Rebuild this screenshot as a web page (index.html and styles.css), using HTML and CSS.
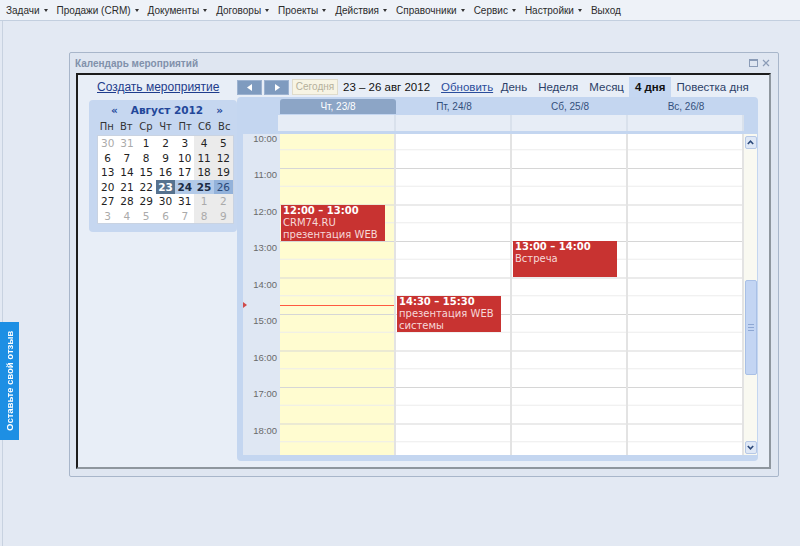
FILE: index.html
```html
<!DOCTYPE html>
<html lang="ru">
<head>
    <meta charset="UTF-8">
    <title>Календарь мероприятий</title>
    <link rel="stylesheet" href="styles.css">
</head>
<body>
<div class="menu">
    <span class="menu-item">Задачи <i class="arrow"></i></span>
    <span class="menu-item">Продажи (CRM) <i class="arrow"></i></span>
    <span class="menu-item">Документы <i class="arrow"></i></span>
    <span class="menu-item">Договоры <i class="arrow"></i></span>
    <span class="menu-item">Проекты <i class="arrow"></i></span>
    <span class="menu-item">Действия <i class="arrow"></i></span>
    <span class="menu-item">Справочники <i class="arrow"></i></span>
    <span class="menu-item">Сервис <i class="arrow"></i></span>
    <span class="menu-item">Настройки <i class="arrow"></i></span>
    <span class="menu-item">Выход</span>
</div>

<div class="page">
    <div class="window">
        <div class="window-title">
            <span>Календарь мероприятий</span>
            <span class="window-buttons">
                <svg width="9" height="8" viewBox="0 0 9 8"><rect x="0.5" y="0.5" width="8" height="7" fill="none" stroke="#8b9cb7"/><line x1="0.5" y1="1.5" x2="8.5" y2="1.5" stroke="#8b9cb7"/></svg>
                <svg width="8" height="8" viewBox="0 0 8 8"><path d="M1 1 L7 7 M7 1 L1 7" stroke="#8b9cb7" stroke-width="1.2"/></svg>
            </span>
        </div>

        <div class="window-body">
            <!-- левая колонка: ссылка и мини-календарь -->
            <div class="side">
                <a class="create-link" href="#">Создать мероприятие</a>
                <div class="minical">
                    <div class="mc-head"><span>«</span><span>Август 2012</span><span>»</span></div>
                    <div class="mc-names">
                        <span>Пн</span><span>Вт</span><span>Ср</span><span>Чт</span><span>Пт</span><span>Сб</span><span>Вс</span>
                    </div>
                    <div class="mc-grid">
                        <span class="o">30</span><span class="o">31</span><span>1</span><span>2</span><span>3</span><span class="we">4</span><span class="we">5</span>
                        <span>6</span><span>7</span><span>8</span><span>9</span><span>10</span><span class="we">11</span><span class="we">12</span>
                        <span>13</span><span>14</span><span>15</span><span>16</span><span>17</span><span class="we">18</span><span class="we">19</span>
                        <span>20</span><span>21</span><span>22</span><span class="sel">23</span><span class="wk">24</span><span class="wk">25</span><span class="wk last">26</span>
                        <span>27</span><span>28</span><span>29</span><span>30</span><span>31</span><span class="we o">1</span><span class="we o">2</span>
                        <span class="o">3</span><span class="o">4</span><span class="o">5</span><span class="o">6</span><span class="o">7</span><span class="we o">8</span><span class="we o">9</span>
                    </div>
                </div>
            </div>

            <div class="main">
                <div class="toolbar">
                    <span class="nav-btn"><svg width="6" height="7" viewBox="0 0 6 7"><path d="M5 0 L0 3.5 L5 7 Z" fill="#fff"/></svg></span>
                    <span class="nav-btn"><svg width="6" height="7" viewBox="0 0 6 7"><path d="M1 0 L6 3.5 L1 7 Z" fill="#fff"/></svg></span>
                    <span class="today-btn">Сегодня</span>
                    <span class="range">23 – 26 авг 2012</span>
                    <a class="refresh" href="#">Обновить</a>
                    <span class="view">День</span>
                    <span class="view">Неделя</span>
                    <span class="view">Месяц</span>
                    <span class="view active">4 дня</span>
                    <span class="view">Повестка дня</span>
                </div>

                <div class="cal">
                    <div class="cal-head">
                        <div class="today">Чт, 23/8</div>
                        <div>Пт, 24/8</div>
                        <div>Сб, 25/8</div>
                        <div>Вс, 26/8</div>
                    </div>
                    <div class="allday">
                        <div></div><div></div><div></div><div></div>
                    </div>
                    <div class="cal-body">
                        <div class="gutter">
                            <i class="now-mark"></i>
                            <div class="hours">
                                <div class="hour">10:00</div>
                                <div class="hour">11:00</div>
                                <div class="hour">12:00</div>
                                <div class="hour">13:00</div>
                                <div class="hour">14:00</div>
                                <div class="hour">15:00</div>
                                <div class="hour">16:00</div>
                                <div class="hour">17:00</div>
                                <div class="hour">18:00</div>
                            </div>
                        </div>
                        <div class="days">
                            <div class="day today">
                                <div class="event" style="top: 70.5px">
                                    <b>12:00 – 13:00</b>CRM74.RU<br>презентация WEB
                                </div>
                                <div class="now-line" style="top: 171px"></div>
                            </div>
                            <div class="day">
                                <div class="event" style="top: 161.75px">
                                    <b>14:30 – 15:30</b>презентация WEB системы
                                </div>
                            </div>
                            <div class="day">
                                <div class="event" style="top: 107px">
                                    <b>13:00 – 14:00</b>Встреча
                                </div>
                            </div>
                            <div class="day"></div>
                        </div>
                        <div class="scroll">
                            <span class="sb-btn"><svg width="7" height="5" viewBox="0 0 7 5"><path d="M0.8 4 L3.5 1.2 L6.2 4" fill="none" stroke="#2d4a7a" stroke-width="1.6"/></svg></span>
                            <span class="thumb"><i></i><i></i><i></i></span>
                            <span class="sb-btn down"><svg width="7" height="5" viewBox="0 0 7 5"><path d="M0.8 1 L3.5 3.8 L6.2 1" fill="none" stroke="#2d4a7a" stroke-width="1.6"/></svg></span>
                        </div>
                    </div>
                </div>
            </div>
        </div>
    </div>
</div>

<a class="feedback" href="#">Оставьте свой отзыв</a>
</body>
</html>
```

FILE: styles.css
```css
body {
    margin: 0;
    height: 546px;
    overflow: hidden;
    background: #e3e9f3;
    font-family: "Liberation Sans", Arial, sans-serif;
}

/* верхнее меню */
.menu {
    height: 20px;
    display: flex;
    align-items: center;
    gap: 9px;
    padding-left: 6px;
    background: #eef2f8;
    border-bottom: 1px solid #c3cfdf;
    font-size: 10px;
    color: #2b2b2b;
}

.menu-item {
    display: flex;
    align-items: center;
    gap: 4px;
    white-space: nowrap;
}

.arrow {
    width: 0;
    height: 0;
    border-left: 2.5px solid transparent;
    border-right: 2.5px solid transparent;
    border-top: 3px solid #333;
}

.page {
    margin-left: 2px;
    border-left: 1px solid #c8d2e0;
    height: 525px;
    padding-top: 31px;
    box-sizing: border-box;
}

/* окно */
.window {
    margin-left: 66px;
    width: 710px;
    height: 425px;
    box-sizing: border-box;
    background: #dfe6f1;
    border: 1px solid #a8b6ca;
    border-radius: 2px;
}

.window-title {
    height: 20px;
    display: flex;
    align-items: center;
    justify-content: space-between;
    padding: 0 8px 0 5px;
    font-size: 10px;
    font-weight: bold;
    color: #8191ab;
}

.window-buttons {
    display: flex;
    gap: 4px;
    align-items: center;
}

.window-body {
    margin: 0 7px 0 6px;
    height: 396px;
    box-sizing: border-box;
    border: 2px solid;
    border-color: #1c1c1c #8e969e #8e969e #1c1c1c;
    background: #e8eef7;
    display: flex;
}

/* левая колонка */
.side {
    flex: none;
    width: 148px;
    margin-left: 11px;
    padding-top: 2px;
}

.create-link {
    display: block;
    height: 21px;
    line-height: 21px;
    margin-left: 8px;
    font-size: 12px;
    color: #1e3c8c;
}

.minical {
    margin-top: 2px;
    height: 132px;
    box-sizing: border-box;
    padding: 2px 3px 0 8px;
    background: #c6d7f0;
    border-radius: 4px;
    font-family: "DejaVu Sans", Verdana, sans-serif;
}

.mc-head {
    height: 16px;
    display: flex;
    align-items: center;
    justify-content: space-between;
    padding: 0 11px 0 14px;
    font-size: 10.5px;
    font-weight: bold;
    color: #23479a;
}

.mc-names {
    display: grid;
    grid-template-columns: repeat(7, 1fr);
    width: 137px;
    height: 17px;
    line-height: 17px;
    text-align: center;
    font-size: 10px;
    color: #333;
}

.mc-grid {
    display: grid;
    grid-template-columns: repeat(7, 1fr);
    grid-template-rows: repeat(6, 1fr);
    width: 137px;
    height: 89px;
    box-sizing: border-box;
    background: #fff;
    border: 1px solid #c9d3e2;
    font-size: 10.5px;
    color: #222;
}

.mc-grid span {
    display: flex;
    align-items: center;
    justify-content: center;
}

.mc-grid .we {
    background: #ebebeb;
}

.mc-grid .o {
    color: #aaa;
}

.mc-grid .sel {
    background: #56728f;
    color: #fff;
    font-weight: bold;
}

.mc-grid .wk {
    background: #b3cae8;
    font-weight: bold;
    color: #1c2b45;
}

.mc-grid .wk.last {
    background: #93b2da;
    font-weight: normal;
    color: #2b4a7a;
}

/* правая колонка */
.main {
    flex: none;
    width: 521px;
    padding-top: 2px;
}

.toolbar {
    height: 20px;
    display: flex;
    align-items: center;
    white-space: nowrap;
}

.toolbar > * {
    flex: none;
}

.nav-btn {
    width: 25px;
    height: 15px;
    box-sizing: border-box;
    margin-right: 2px;
    display: flex;
    align-items: center;
    justify-content: center;
    background: #7f9bbf;
    border: 1px solid #9cb2d0;
}

.today-btn {
    margin-left: 1px;
    width: 46px;
    height: 16px;
    box-sizing: border-box;
    line-height: 14px;
    text-align: center;
    background: #f7f4e4;
    border: 1px solid #e0dccb;
    font-size: 10px;
    color: #b5b09c;
}

.range {
    margin-left: 5px;
    font-size: 11.5px;
    color: #111;
}

.refresh {
    margin: 0 2px 0 11px;
    font-size: 11.5px;
    color: #2a4d9c;
}

.view {
    height: 20px;
    line-height: 20px;
    padding: 0 5.5px;
    font-size: 11.5px;
    color: #2c3f68;
}

.view.active {
    background: #c5d7f1;
    font-weight: bold;
    color: #111;
}

/* календарь */
.cal {
    height: 364px;
    box-sizing: border-box;
    padding: 2px 1px 6px 6px;
    background: #c4d6f0;
    border-radius: 4px;
}

.cal-head {
    display: flex;
    height: 15px;
    margin-left: 37px;
}

.cal-head div {
    width: 116px;
    text-align: center;
    line-height: 15px;
    font-size: 10px;
    color: #34507c;
}

.cal-head .today {
    background: #8ca5c6;
    color: #fff;
    border-radius: 3px 3px 0 0;
}

.allday {
    display: flex;
    height: 16px;
    margin: 1px 13px 0 35px;
    padding-left: 2px;
    background: #e7edf6;
}

.allday div {
    width: 116px;
    box-sizing: border-box;
    border-right: 2px solid #d9e1ec;
}

.cal-body {
    display: flex;
    height: 321px;
    margin-top: 3px;
    overflow: hidden;
}

.gutter {
    width: 37px;
    position: relative;
    background: #dfe7f3;
}

.hours {
    margin-top: -2.5px;
}

.hour {
    height: 36.5px;
    box-sizing: border-box;
    padding: 2px 3px 0 0;
    text-align: right;
    line-height: 10px;
    font-size: 9.5px;
    color: #6a6a6a;
}

.now-mark {
    position: absolute;
    left: 0;
    top: 168px;
    width: 0;
    height: 0;
    border-top: 3.5px solid transparent;
    border-bottom: 3.5px solid transparent;
    border-left: 4px solid #d04a4a;
}

.days {
    display: flex;
    width: 464px;
}

.day {
    position: relative;
    width: 116px;
    box-sizing: border-box;
    border-right: 2px solid #e3e3e3;
    background-color: #fff;
    background-image: linear-gradient(to bottom, #d6d6d6 0, #d6d6d6 1px, transparent 1px, transparent 18px, #ececec 18px, #ececec 19px, transparent 19px);
    background-size: 100% 36.5px;
    background-position: 0 -2.5px;
}

.day.today {
    background-color: #fffcd0;
}

.event {
    position: absolute;
    left: 1px;
    width: 104px;
    height: 36px;
    box-sizing: border-box;
    padding: 0 2px;
    overflow: hidden;
    background: #c83331;
    font-family: "DejaVu Sans", Verdana, sans-serif;
    font-size: 10px;
    line-height: 12px;
    color: #f6d9d9;
}

.event b {
    display: block;
    color: #fff;
}

.now-line {
    position: absolute;
    left: 0;
    right: 0;
    height: 1px;
    background: #ff5a40;
}

.scroll {
    width: 13px;
    display: flex;
    flex-direction: column;
    align-items: center;
    background: #f9f9f1;
}

.sb-btn {
    width: 12px;
    height: 13px;
    margin-top: 2px;
    box-sizing: border-box;
    display: flex;
    align-items: center;
    justify-content: center;
    background: #dfe8f6;
    border: 1px solid #b6c8e6;
    border-radius: 2px;
}

.sb-btn.down {
    margin-top: 66px;
}

.thumb {
    width: 12px;
    height: 95px;
    margin-top: 131px;
    box-sizing: border-box;
    display: flex;
    flex-direction: column;
    align-items: center;
    justify-content: center;
    gap: 2px;
    background: #c3d5f3;
    border: 1px solid #a9c0e6;
    border-radius: 2px;
}

.thumb i {
    width: 6px;
    height: 1px;
    background: #8ea8d4;
}

/* вкладка отзыва */
.feedback {
    position: fixed;
    left: 0;
    top: 322px;
    width: 19px;
    height: 118px;
    background: #1d8fe4;
    color: #fff;
    font-size: 9.5px;
    font-weight: bold;
    text-decoration: none;
    writing-mode: vertical-rl;
    transform: rotate(180deg);
    text-align: center;
    line-height: 19px;
}
```
